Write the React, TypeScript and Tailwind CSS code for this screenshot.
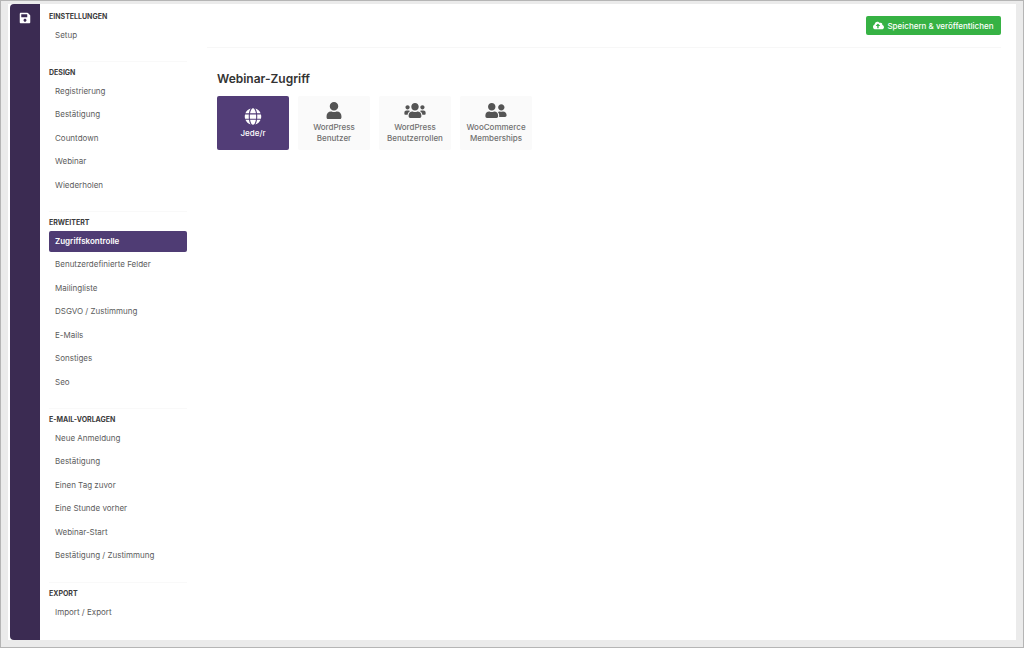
import { FaCloudUploadAlt, FaGlobe, FaSave, FaUser, FaUserFriends, FaUsers } from "react-icons/fa";

const sections = [
  { title: "Einstellungen", items: ["Setup"] },
  {
    title: "Design",
    items: ["Registrierung", "Bestätigung", "Countdown", "Webinar", "Wiederholen"]
  },
  {
    title: "Erweitert",
    items: [
      "Zugriffskontrolle",
      "Benutzerdefinierte Felder",
      "Mailingliste",
      "DSGVO / Zustimmung",
      "E-Mails",
      "Sonstiges",
      "Seo"
    ]
  },
  {
    title: "E-Mail-Vorlagen",
    items: [
      "Neue Anmeldung",
      "Bestätigung",
      "Einen Tag zuvor",
      "Eine Stunde vorher",
      "Webinar-Start",
      "Bestätigung / Zustimmung"
    ]
  },
  { title: "Export", items: ["Import / Export"] }
];

const accessOptions = [
  { lines: ["Jede/r"], icon: FaGlobe },
  { lines: ["WordPress", "Benutzer"], icon: FaUser },
  { lines: ["WordPress", "Benutzerrollen"], icon: FaUsers },
  { lines: ["WooCommerce", "Memberships"], icon: FaUserFriends }
];

const activeItem = "Zugriffskontrolle";

function Sidebar() {
  return (
    <nav className="w-[138px] shrink-0 pt-2" aria-label="Einstellungen">
      {sections.map((section) => (
        <section key={section.title} className="group pb-[6px] last:pb-0">
          <h2 className="mb-1 text-[7px] leading-[9px] font-bold text-[#3c3c3c] uppercase">
            {section.title}
          </h2>
          <ul className="border-b border-[#f9f9f9] pb-[13px] group-last:border-0 group-last:pb-0">
            {section.items.map((item) => (
              <li key={item} className="odd:mb-[2px] even:mb-[3px]">
                <a
                  href="#"
                  aria-current={item === activeItem ? "page" : undefined}
                  className="block h-[21px] rounded-xs px-[6px] text-[8px] leading-[20px] text-[#5c5c5c] aria-[current=page]:bg-[#4f3c74] aria-[current=page]:font-semibold aria-[current=page]:text-white"
                >
                  {item}
                </a>
              </li>
            ))}
          </ul>
        </section>
      ))}
    </nav>
  );
}

function AccessOptions() {
  return (
    <div className="flex flex-wrap gap-[9px]">
      {accessOptions.map(({ lines, icon: Icon }, index) => (
        <button
          key={lines.join(" ")}
          type="button"
          aria-pressed={index === 0}
          className="group flex h-[54px] w-[72px] flex-col items-center justify-center rounded-xs bg-[#fafafa] text-[8px] leading-[11px] font-medium text-[#707070] aria-pressed:bg-[#523d77] aria-pressed:text-white"
        >
          <Icon className="mb-[3px] h-[17px] w-[22px] text-[#555] group-aria-pressed:text-white" />
          {lines.map((line) => (
            <span key={line}>{line}</span>
          ))}
        </button>
      ))}
    </div>
  );
}

export default function App() {
  return (
    <div className="min-h-screen border border-[#b5b5b5] bg-[#ebebeb] px-[7px] pt-[3px] pb-[7px] font-['Inter',sans-serif]">
      <div className="flex min-h-[calc(100vh-12px)] bg-white pl-[2px]">
        <aside className="flex w-[30px] shrink-0 justify-center rounded-l-sm bg-[#3b2b52] pt-2">
          <button type="button" aria-label="Speichern" className="h-3 text-white">
            <FaSave size={12} />
          </button>
        </aside>
        <div className="flex flex-1 gap-[20px] pr-[15px] pl-[9px]">
          <Sidebar />
          <main className="flex-1">
            <header className="flex justify-end border-b border-[#f7f7f7] pt-3 pb-3">
              <button
                type="button"
                className="flex h-[19px] w-[135px] items-center justify-center gap-[3px] rounded-xs bg-[#36b244] text-[8px] font-medium text-white"
              >
                <FaCloudUploadAlt size={11} />
                Speichern &amp; veröffentlichen
              </button>
            </header>
            <div className="px-[10px] pt-[23px]">
              <h1 className="mb-[9px] text-[12px] leading-[16px] font-semibold text-[#333]">
                Webinar-Zugriff
              </h1>
              <AccessOptions />
            </div>
          </main>
        </div>
      </div>
    </div>
  );
}
